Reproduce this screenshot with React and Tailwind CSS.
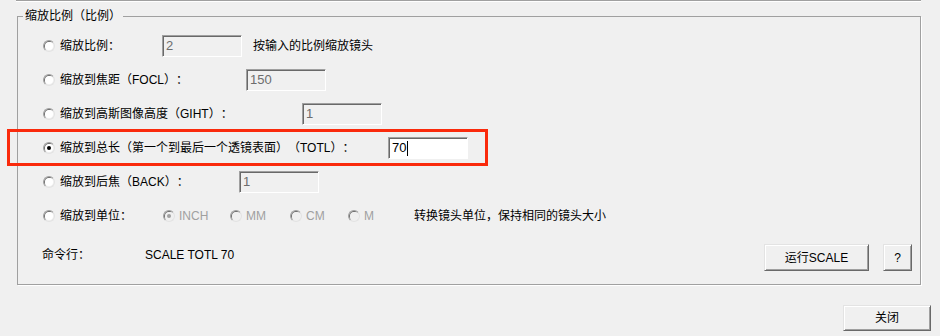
import React from "react";

const font = { fontFamily: '"Liberation Sans", "Noto Sans CJK SC", sans-serif' };

const Radio = ({ checked = false, disabled = false }) => (
  <span className="relative flex h-[12px] w-[12px] shrink-0 items-center justify-center rounded-full border border-t-[#a0a0a0] border-l-[#a0a0a0] border-r-[#e3e3e3] border-b-[#e3e3e3] shadow-[inset_1px_1px_0_0_#696969]">
    <span className={`h-[8px] w-[8px] rounded-full ${disabled ? "bg-[#f0f0f0]" : "bg-white"} flex items-center justify-center`}>
      {checked && <span className={`h-[4px] w-[4px] rounded-full ${disabled ? "bg-[#a0a0a0]" : "bg-black"}`} />}
    </span>
  </span>
);

const Field = ({ value, active = false }) => (
  <div
    className={`flex h-[22px] w-[80px] shrink-0 items-center border border-t-[#a0a0a0] border-l-[#a0a0a0] border-r-white border-b-white pl-[3px] text-[13px] shadow-[inset_1px_1px_0_0_#696969] ${
      active ? "bg-white text-black" : "bg-[#f0f0f0] text-[#6d6d6d]"
    }`}
  >
    {value}
    {active && <span className="ml-[1px] h-[15px] w-[1px] bg-black" />}
  </div>
);

const Button = ({ children, className = "" }) => (
  <button
    className={`flex items-center justify-center border border-t-[#e3e3e3] border-l-[#e3e3e3] border-r-[#696969] border-b-[#696969] bg-[#f0f0f0] text-[12px] text-black shadow-[inset_1px_1px_0_0_#ffffff,inset_-1px_-1px_0_0_#a0a0a0] ${className}`}
  >
    {children}
  </button>
);

const Row = ({ label, labelWidth, value, checked, active, note }) => (
  <div className="flex h-[34px] items-center">
    <div className="ml-[25px]">
      <Radio checked={checked} />
    </div>
    <span className="ml-[5px] shrink-0" style={{ width: labelWidth }}>
      {label}
    </span>
    <Field value={value} active={active} />
    {note && <span className="ml-[11px]">{note}</span>}
  </div>
);

const units = [
  { name: "INCH", w: "w-[67px]", checked: true },
  { name: "MM", w: "w-[60px]" },
  { name: "CM", w: "w-[58px]" },
  { name: "M", w: "w-[66px]" },
];

export default function App() {
  return (
    <div
      className="relative h-[336px] w-[940px] overflow-hidden bg-[#f0f0f0] text-[12px] text-black [text-spacing-trim:space-all]"
      style={font}
    >
      <div className="ml-[16px] h-[2px] w-[905px] border-t border-[#a0a0a0] border-b border-b-white" />

      <fieldset className="ml-[17px] mt-[6px] w-[904px] border border-[#a0a0a0] shadow-[1px_1px_0_0_#ffffff]">
        <legend className="ml-[5px] px-[2px] leading-[16px]">缩放比例（比例）</legend>
        <div className="pt-[5px] pb-[13px]">
          <Row label="缩放比例：" labelWidth="102px" value="2" note="按输入的比例缩放镜头" />
          <Row label="缩放到焦距（FOCL）：" labelWidth="186px" value="150" />
          <Row label="缩放到高斯图像高度（GIHT）：" labelWidth="242px" value="1" />
          <Row label="缩放到总长（第一个到最后一个透镜表面）（TOTL）：" labelWidth="328px" value="70" checked active />
          <Row label="缩放到后焦（BACK）：" labelWidth="179px" value="1" />

          <div className="flex h-[34px] items-center">
            <div className="ml-[25px]">
              <Radio />
            </div>
            <span className="ml-[5px] w-[103px] shrink-0">缩放到单位：</span>
            {units.map((u) => (
              <div key={u.name} className={`flex items-center ${u.w} shrink-0 text-[#a0a0a0]`}>
                <Radio checked={u.checked} disabled />
                <span className="ml-[4px]">{u.name}</span>
              </div>
            ))}
            <span>转换镜头单位，保持相同的镜头大小</span>
          </div>

          <div className="mt-[11px] flex h-[27px] items-start">
            <span className="ml-[24px] w-[103px] shrink-0 pt-[2px]">命令行：</span>
            <span className="pt-[2px]">SCALE TOTL 70</span>
            <div className="ml-auto mr-[8px] flex gap-[14px]">
              <Button className="h-[27px] w-[105px]">运行SCALE</Button>
              <Button className="h-[27px] w-[29px]">?</Button>
            </div>
          </div>
        </div>
      </fieldset>

      <div className="mt-[20px] flex justify-end pr-[9px]">
        <Button className="h-[26px] w-[88px]">关闭</Button>
      </div>

      <div className="pointer-events-none absolute left-[7px] top-[129px] h-[37px] w-[481px] border-[3px] border-[#fa2a0c]" />
    </div>
  );
}
